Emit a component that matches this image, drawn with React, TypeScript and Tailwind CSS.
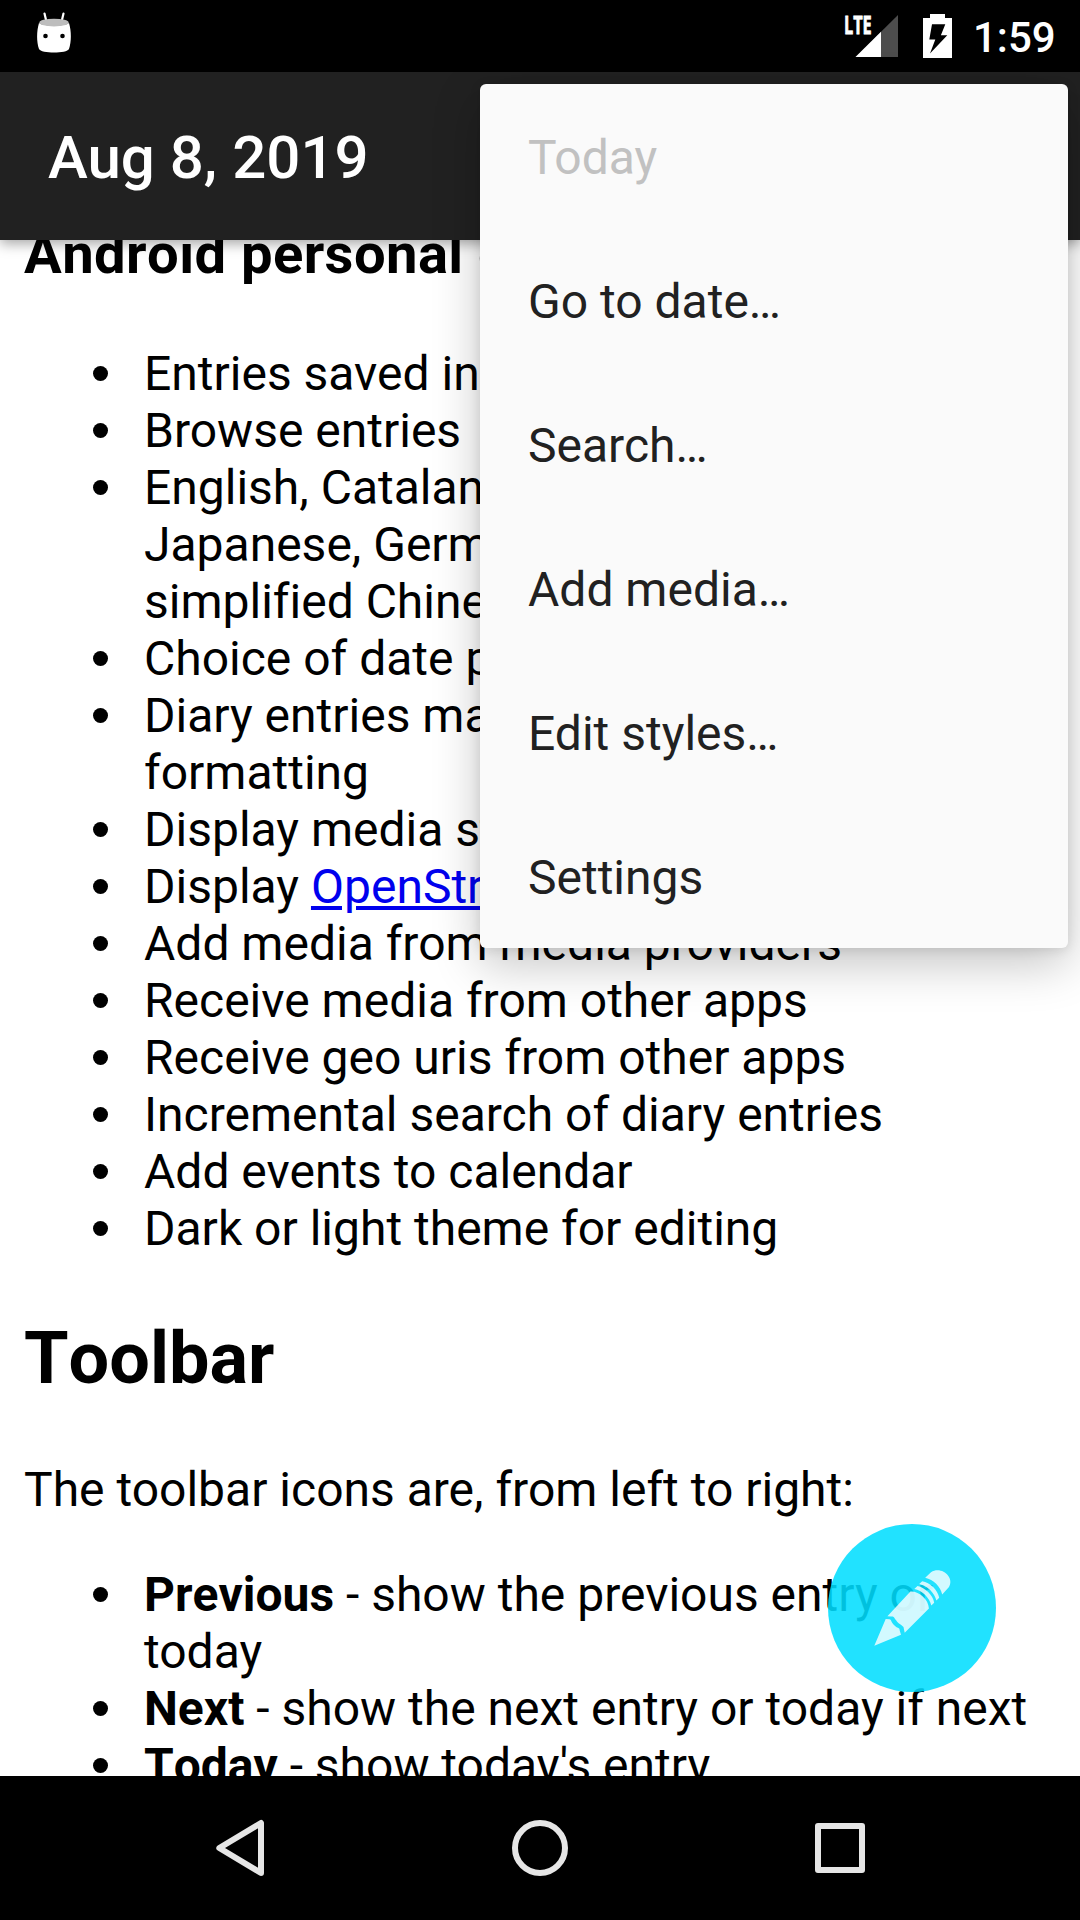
import React from "react";

const features: React.ReactNode[] = [
  "Entries saved in local storage",
  "Browse entries",
  <>English, Catalan, French,<br />Japanese, German, Polish,<br />simplified Chinese</>,
  "Choice of date picker",
  <>Diary entries may use markdown<br />formatting</>,
  "Display media stored in diary",
  <>Display <span className="text-[#0000ee] underline">OpenStreetMap</span></>,
  "Add media from media providers",
  "Receive media from other apps",
  "Receive geo uris from other apps",
  "Incremental search of diary entries",
  "Add events to calendar",
  "Dark or light theme for editing",
];

const actions: React.ReactNode[] = [
  <><Term>Previous</Term> - show the previous entry or<br />today</>,
  <><Term>Next</Term> - show the next entry or today if next</>,
  <><Term>Today</Term> - show today's entry</>,
];

const menu = ["Today", "Go to date…", "Search…", "Add media…", "Edit styles…", "Settings"];

function Term({ children }: { children: React.ReactNode }) {
  return <b className="font-bold [font-kerning:none]">{children}</b>;
}

function Bullets({ items }: { items: React.ReactNode[] }) {
  return (
    <ul className="pl-[120px]">
      {items.map((item, i) => (
        <li key={i} className="relative whitespace-nowrap">
          <span className="absolute -left-[51px] top-[21px] size-[15px] rounded-full bg-black" />
          {item}
        </li>
      ))}
    </ul>
  );
}

function StatusBar() {
  return (
    <header className="flex h-[72px] shrink-0 items-start bg-black text-white">
      <svg className="ml-9 mt-[11px]" width="36" height="43" viewBox="0 0 36 43">
        <path d="M8.5 2.5 L10.5 11 M27.5 2.5 L25.5 11" stroke="#fff" strokeWidth="2.2" strokeLinecap="round" />
        <path d="M3 12 C8 15.5 28 15.5 33 12 C35.5 20 35.5 31 33 38 C31 42.8 5 42.8 3 38 C.5 31 .5 20 3 12Z" fill="#fff" />
        <ellipse cx="18" cy="11.6" rx="14.7" ry="3.9" fill="#bdbdbd" />
        <circle cx="9.5" cy="25" r="2.3" /><circle cx="26.5" cy="25" r="2.3" />
      </svg>
      <div className="relative ml-auto h-[72px] w-[55px]">
        <span className="absolute left-0 top-[11px] origin-left scale-x-[0.65] font-['Open_Sans'] text-[25px] leading-[27px] font-bold [-webkit-text-stroke:0.8px_white]">LTE</span>
        <svg className="absolute left-[11px] top-[15px]" width="43" height="42" viewBox="0 0 43 42">
          <path d="M43 0V42H.5Z" fill="#4d4d4d" /><path d="M26 16.8V42H.5Z" fill="#fff" />
        </svg>
      </div>
      <svg className="ml-6 mt-[14px]" width="29" height="44" viewBox="0 0 29 44">
        <path d="M7 0H22V4H29V44H0V4H7Z" fill="#fff" />
        <path d="M9 10.3H22.3L17.9 21.2H24.3L7 39.5L12.3 25.5H6.3Z" fill="#000" />
      </svg>
      <time className="ml-[21px] mt-[13px] w-[107px] text-[42px] leading-[50px] font-medium">1:59</time>
    </header>
  );
}

function EditButton() {
  return (
    <button className="absolute left-[828px] top-[1524px] size-[168px] rounded-full bg-[#00deff]/87" aria-label="Edit">
      <svg width="168" height="168" viewBox="0 0 168 168" fill="#fff" fillOpacity="0.8">
        <path d="M46.3 121.7 L57.7 94.9 L61.5 95.3 C63.5 95.8 63 97.5 64.3 99 C66 101 67 102.5 69 103.4 C72 104.2 71.5 105.5 72 107.5 L73 110.7Z" />
        <path d="M59.4 92.3 L82.4 67.6 C91 67 100.5 75.5 100.9 84.5 L76.7 108.7 L75.5 103 C74 101 72.5 100.7 71 99.4 C69.3 98.4 68.7 96.8 67 95 C66 92.5 65 92.3 63 92.4Z" />
        <path d="M86.3 65 L89.5 62 C97 63.5 105 71 106.2 78.7 L103.3 81.6 C101.5 73.5 94 66.5 86.3 65Z" />
        <path d="M91.2 60 L94.2 57.2 C102 58.5 110 66 111.2 73.8 L108.4 76.6 C106.5 69 99.5 61.8 91.2 60Z" />
        <path d="M97.2 53.8 L103 48.2 C113 41.5 127 53 121 63 L114.2 70.6 C112.5 62.5 105.5 55.5 97.2 53.8Z" />
      </svg>
    </button>
  );
}

export default function App() {
  return (
    <div className="relative flex h-[1920px] w-[1080px] flex-col overflow-hidden bg-white font-[Roboto,sans-serif] text-black [font-variant-ligatures:none]">
      <StatusBar />
      <div className="z-10 flex h-[168px] shrink-0 items-center bg-[#212121] pl-12 shadow-[0_4px_12px_rgba(0,0,0,0.34)]">
        <h1 className="mt-[4px] text-[60px] leading-[70px] font-medium text-white">Aug 8, 2019</h1>
      </div>
      <main className="min-h-0 flex-1 overflow-hidden px-6 text-[48px] leading-[57px]">
        <h3 className="-mt-[19px] mb-[58px] whitespace-nowrap text-[56.16px] leading-[66px] font-bold tracking-[0.42px] [font-kerning:none]">Android personal diary</h3>
        <Bullets items={features} />
        <h2 className="mt-[59px] mb-[60px] text-[72px] leading-[85px] font-bold [font-kerning:none]">Toolbar</h2>
        <p className="mb-12">The toolbar icons are, from left to right:</p>
        <Bullets items={actions} />
      </main>
      <nav className="flex h-36 shrink-0 items-center justify-around bg-black px-[90px]">
        <svg width="60" height="60" viewBox="0 0 60 60" fill="none" stroke="#e6e6e6" strokeWidth="6" strokeLinejoin="round"><path d="M51 5V55L9.3 30Z" /></svg>
        <svg width="60" height="60" viewBox="0 0 60 60" fill="none" stroke="#e6e6e6" strokeWidth="6"><circle cx="30" cy="30" r="25" /></svg>
        <svg width="60" height="60" viewBox="0 0 60 60" fill="none" stroke="#e6e6e6" strokeWidth="6" strokeLinejoin="round"><path d="M8 8H52V52H8Z" /></svg>
      </nav>
      <EditButton />
      <div className="absolute left-[480px] top-[84px] z-20 w-[588px] rounded-[6px] bg-[#fafafa] text-[48px] leading-[57px] text-[#212121] shadow-[0_16px_48px_rgba(0,0,0,0.23),0_2px_12px_rgba(0,0,0,0.1)]">
        {menu.map((label, i) => (
          <div key={label} className={i === 0 ? "flex h-36 items-center pt-[2px] pl-12 text-[#c1c1c1]" : "flex h-36 items-center pt-[2px] pl-12"}>{label}</div>
        ))}
      </div>
    </div>
  );
}
